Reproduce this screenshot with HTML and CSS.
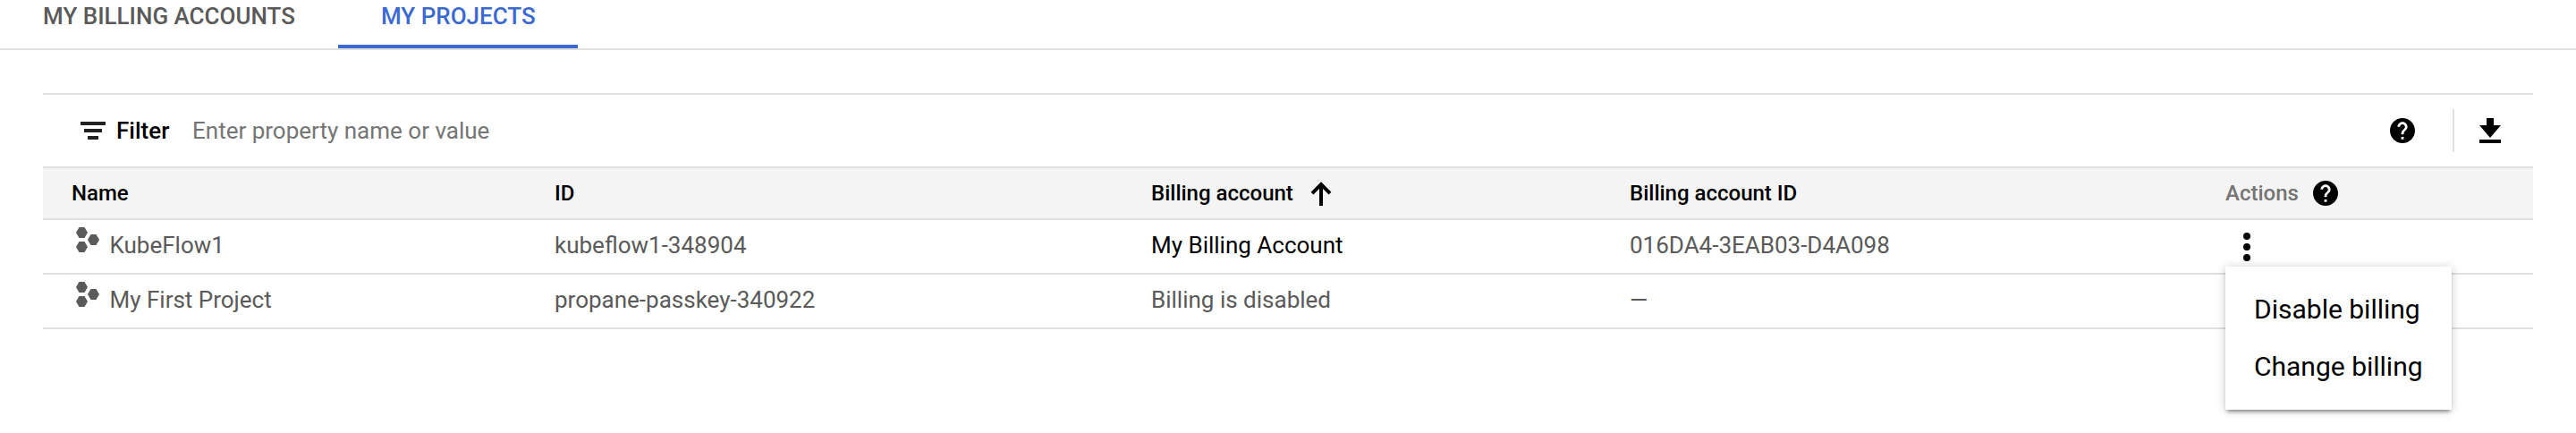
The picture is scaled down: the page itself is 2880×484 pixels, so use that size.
FILE: index.html
```html
<!DOCTYPE html>
<html lang="en">
<head>
<meta charset="utf-8">
<title>Billing – My projects</title>
<link rel="stylesheet" href="styles.css">
</head>
<body>
<svg class="defs" width="0" height="0">
  <symbol id="help" viewBox="2 2 20 20"><path d="M12 2C6.48 2 2 6.48 2 12s4.480 10 10 10 10-4.480 10-10S17.520 2 12 2zm1 17h-2v-2h2v2zm2.070-7.750l-.9.920C13.450 12.900 13 13.500 13 15h-2v-.5c0-1.100.450-2.100 1.170-2.830l1.240-1.260c.370-.360.590-.860.590-1.410 0-1.100-.9-2-2-2s-2 .9-2 2H8c0-2.210 1.790-4 4-4s4 1.790 4 4c0 .880-.360 1.680-.930 2.250z"/></symbol>
  <symbol id="project" viewBox="0 0 26 28"><path d="M3.500 0h6L13 6l-3.500 6h-6L0 6zM16.500 8h6L26 14l-3.500 6h-6L13 14zM3.500 16h6L13 22l-3.500 6h-6L0 22z"/></symbol>
</svg>
<nav class="tabs">
  <a class="tab">MY BILLING ACCOUNTS</a>
  <a class="tab tab-active">MY PROJECTS</a>
</nav>
<main class="content">
  <div class="filter-bar">
    <svg class="filter-icon" viewBox="0 0 28 20"><path d="M0 0h28v4H0zM4 8h20v4H4zM8 16h12v4H8z"/></svg>
    <span class="filter-label">Filter</span>
    <span class="filter-placeholder">Enter property name or value</span>
    <svg class="help-icon filter-help"><use href="#help"/></svg>
    <span class="divider"></span>
    <svg class="download-icon" viewBox="0 0 24 28"><path d="M8 0h8v8h8L12 22 0 8h8zM0 24h24v4H0z"/></svg>
  </div>
  <div class="table">
    <div class="row head">
      <span class="cell">Name</span>
      <span class="cell">ID</span>
      <span class="cell">Billing account
        <svg class="sort-icon" viewBox="0 0 24 27"><path d="M2 13.200 12 3.200l10 10M12 3v24" /></svg>
      </span>
      <span class="cell">Billing account ID</span>
      <span class="cell actions-head">Actions <svg class="help-icon"><use href="#help"/></svg></span>
    </div>
    <div class="row">
      <span class="cell name"><svg class="project-icon"><use href="#project"/></svg>KubeFlow1</span>
      <span class="cell">kubeflow1-348904</span>
      <span class="cell linked">My Billing Account</span>
      <span class="cell">016DA4-3EAB03-D4A098</span>
      <span class="cell actions">
        <svg class="more-icon" viewBox="0 0 8 32"><circle cx="4" cy="4" r="4"/><circle cx="4" cy="16" r="4"/><circle cx="4" cy="28" r="4"/></svg>
        <span class="menu">
          <span class="menu-item">Disable billing</span>
          <span class="menu-item">Change billing</span>
        </span>
      </span>
    </div>
    <div class="row">
      <span class="cell name"><svg class="project-icon"><use href="#project"/></svg>My First Project</span>
      <span class="cell">propane-passkey-340922</span>
      <span class="cell">Billing is disabled</span>
      <span class="cell"><span class="dash">—</span></span>
      <span class="cell"></span>
    </div>
  </div>
</main>
</body>
</html>
```
FILE: styles.css
```css
* { box-sizing: border-box; }
body {
  margin: 0;
  height: 484px;
  overflow: hidden;
  background: #fff;
  color: #5a5a5a;
  font: 26px/32px Roboto, sans-serif;
}
svg { display: block; flex: none; }
.defs { position: absolute; }
.tabs {
  display: flex;
  height: 56px;
  border-bottom: 2px solid #e0e0e0;
  white-space: nowrap;
}
.tab {
  padding: 2px 48px 0;
  font-weight: 500;
}
.tab-active {
  padding-right: 47px;
  color: #3b69d3;
  border-bottom: 4px solid #3b69d3;
}
.content { padding: 48px 48px 0; }
.filter-bar {
  display: flex;
  align-items: center;
  height: 84px;
  padding: 0 36px 0 42px;
  border-top: 2px solid #e0e0e0;
  border-bottom: 2px solid #e0e0e0;
  white-space: nowrap;
}
.filter-icon { width: 28px; height: 20px; fill: #212121; }
.filter-label { margin-left: 12px; width: 85px; color: #000; font-weight: 500; }
.filter-placeholder { color: #757575; }
.help-icon { width: 28px; height: 28px; fill: #000; }
.filter-help { margin-left: auto; }
.divider { width: 2px; height: 48px; margin: 0 28px 0 42px; background: #e0e0e0; }
.download-icon { width: 24px; height: 28px; fill: #000; }
.row {
  display: grid;
  grid-template-columns: 540px 667px 535px 666px 1fr;
  height: 61px;
  padding-left: 32px;
  border-bottom: 2px solid #e0e0e0;
  white-space: nowrap;
}
.cell { display: flex; padding-top: 12px; }
.head {
  height: 58px;
  background: #f4f4f4;
  color: #000;
  font-size: 24px;
  font-weight: 500;
}
.head .cell { align-items: center; padding: 0; }
.sort-icon { width: 24px; height: 27px; margin-left: 19px; fill: none; stroke: #000; stroke-width: 4; }
.actions-head { gap: 16px; color: #757575; font-weight: 500; }
.project-icon { width: 26px; height: 28px; margin: -4px 11.5px 0 5px; fill: #5a5a5a; }
.linked { color: #000; }
.actions { position: relative; }
.more-icon { width: 8px; height: 32px; margin: 2px 0 0 20px; fill: #000; }
.menu {
  position: absolute;
  z-index: 1;
  top: 52px;
  left: 0;
  display: flex;
  flex-direction: column;
  width: 253px;
  height: 160px;
  padding: 16px 0;
  background: #fff;
  box-shadow: 0 4px 4px -2px rgba(0, 0, 0, .4), 0 1px 10px rgba(0, 0, 0, .2);
}
.menu-item { padding-left: 32px; height: 64px; color: #000; font-size: 30px; line-height: 64px; }
```
